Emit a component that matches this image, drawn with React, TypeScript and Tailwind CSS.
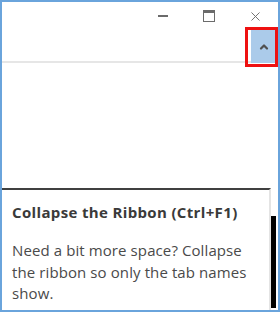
import { ChevronUp, X } from 'lucide-react';

const font = { fontFamily: '"Open Sans", "Noto Sans", sans-serif' };

function CaptionButtons() {
  return (
    <div className="flex h-[28px] justify-end">
      <div className="flex w-[46px] items-center justify-center">
        <div className="h-[2px] w-[10px] bg-[#6b6b6b]" />
      </div>
      <div className="flex w-[46px] items-center justify-center">
        <div className="h-[12px] w-[12px] border border-t-[3px] border-[#6b6b6b]" />
      </div>
      <div className="flex w-[46px] items-center justify-center">
        <X className="h-[15px] w-[15px] text-[#6b6b6b]" strokeWidth={1.5} />
      </div>
    </div>
  );
}

export default function App() {
  return (
    <div
      className="relative flex h-[312px] w-[280px] flex-col overflow-hidden border-2 border-[#6aa4dc] bg-white"
      style={font}
    >
      <CaptionButtons />

      <div className="flex h-[33px] items-stretch">
        <div className="flex-1 border-b-2 border-[#e6e6e6]" />
        <div className="flex w-[25px] items-center justify-center bg-[#abcbea]">
          <ChevronUp className="h-[12px] w-[12px] text-[#505050]" strokeWidth={4.5} />
        </div>
        <div className="w-[2px]" />
      </div>

      <div className="flex-1" />

      <div className="mr-[2px] flex h-[122px]">
        <div className="flex-1 border-r-2 border-t-2 border-[#404040] border-r-[#e4e4e4] bg-white pl-[10px] pr-[10px] pt-[12px] text-[#4a4a4a]">
          <p className="text-[15px] font-bold leading-[20px] tracking-[0.35px] text-[#3a3a3a]">
            Collapse the Ribbon (Ctrl+F1)
          </p>
          <p className="mt-[18px] text-[15px] leading-[21.5px] tracking-[0.1px]">
            Need a bit more space? Collapse the ribbon so only the tab names show.
          </p>
        </div>
        <div className="mb-[2px] mt-[28px] w-[5px] bg-black" />
      </div>

      <div className="absolute right-[0px] top-[25px] h-[40px] w-[33px] border-[3px] border-[#ee1111]" />
    </div>
  );
}
